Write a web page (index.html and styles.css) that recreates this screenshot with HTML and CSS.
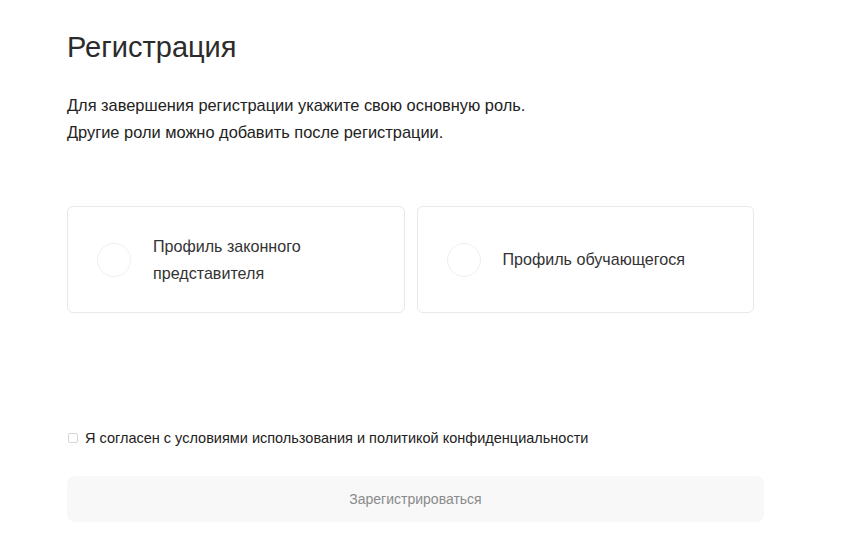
FILE: index.html
```html
<!DOCTYPE html>
<html lang="ru">
<head>
<meta charset="utf-8">
<title>Регистрация</title>
<link rel="stylesheet" href="styles.css">
</head>
<body>
<main class="page">
  <h1 class="title">Регистрация</h1>
  <p class="lead">Для завершения регистрации укажите свою основную роль.<br>Другие роли можно добавить после регистрации.</p>
  <div class="roles">
    <label class="role">
      <span class="radio"></span>
      <span class="role-text">Профиль законного<br>представителя</span>
    </label>
    <label class="role">
      <span class="radio"></span>
      <span class="role-text">Профиль обучающегося</span>
    </label>
  </div>
  <label class="agree">
    <span class="box"></span>
    <span class="agree-text">Я согласен с условиями использования и политикой конфиденциальности</span>
  </label>
  <button class="submit" type="button">Зарегистрироваться</button>
</main>
</body>
</html>
```
FILE: styles.css
```css
* { box-sizing: border-box; }
html, body { margin: 0; padding: 0; background: #fff; }
body { font-family: "Liberation Sans", Arial, sans-serif; color: #222; }
.page { width: 697px; margin-left: 67px; padding-top: 29px; }
.title { margin: 0; font-size: 29px; font-weight: 400; line-height: 36px; color: #2b2b2b; }
.lead { margin: 27px 0 0; font-size: 16.4px; line-height: 27px; color: #222; }
.roles { display: flex; gap: 12px; margin-top: 60px; width: 687px; }
.role { flex: 1; height: 107px; border: 1px solid #e9e9e9; border-radius: 6px; display: flex; align-items: center; padding-left: 29px; }
.radio { width: 34px; height: 34px; border-radius: 50%; border: 1px solid #efefef; flex: none; }
.role-text { margin-left: 22px; font-size: 16.1px; line-height: 27px; color: #333; }
.agree { display: flex; align-items: center; margin-top: 115px; }
.box { width: 10px; height: 10px; border: 1px solid #d6d6d6; border-radius: 2px; margin-left: 1px; flex: none; }
.agree-text { margin-left: 7px; font-size: 14.5px; line-height: 20px; color: #222; }
.submit { display: block; width: 697px; height: 46px; margin-top: 28px; border: none; border-radius: 8px; background: #f8f8f8; color: #8a8a8a; font-family: "Liberation Sans", Arial, sans-serif; font-size: 14px; }
```
